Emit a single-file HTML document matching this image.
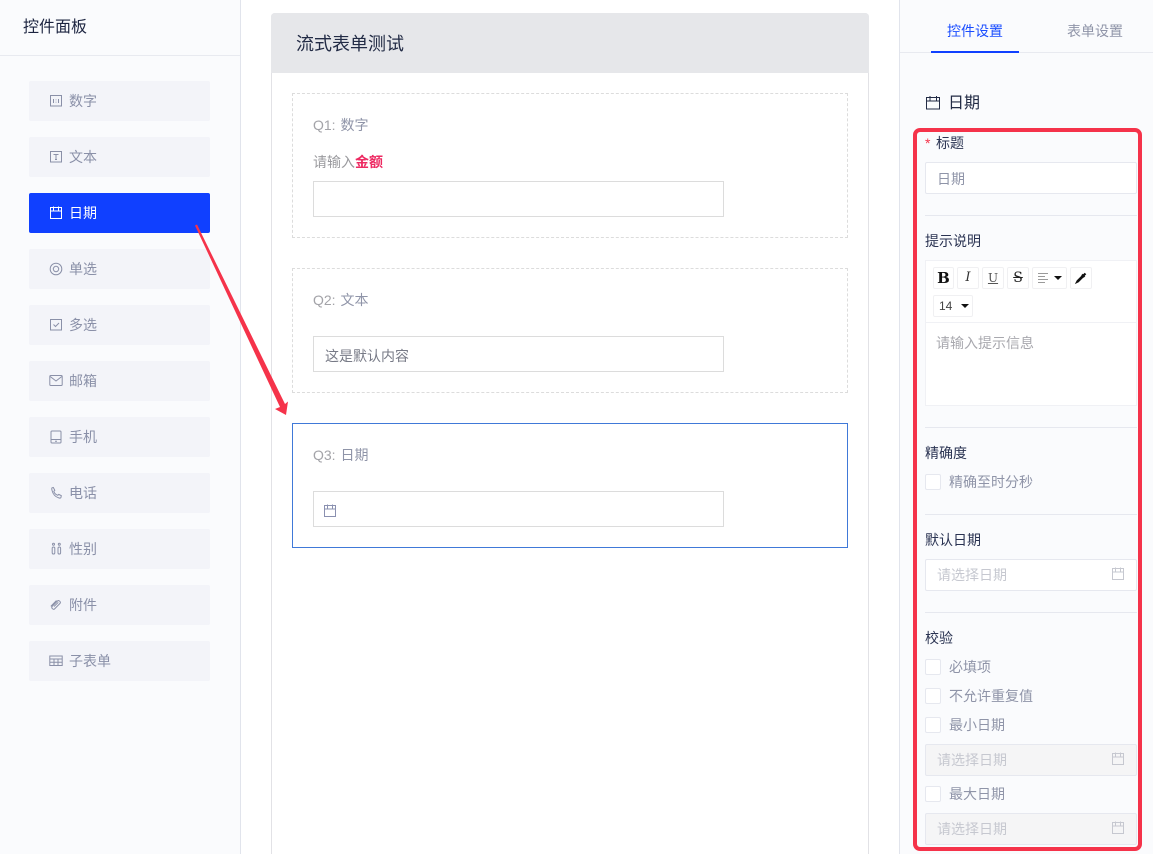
<!DOCTYPE html>
<html lang="zh">
<head>
<meta charset="utf-8">
<style>
html,body{margin:0;padding:0;width:1153px;height:854px;overflow:hidden;background:#fff}
body{position:relative;font-family:"Liberation Sans","Noto Sans CJK SC",sans-serif;font-size:14px;color:#8a8fa8}
.a{position:absolute;box-sizing:border-box}
.t{position:absolute;white-space:nowrap;line-height:20px}
.item{position:absolute;left:29px;width:181px;height:40px;box-sizing:border-box;background:#f3f4f9;border-radius:2px;color:#8a90a8;line-height:40px;padding-left:40px}
.item.on{background:#1040ff;color:#fff}
.item svg{position:absolute;left:20px;top:13px}
svg{display:block;fill:none;stroke:currentColor;stroke-width:1}
.lab{color:#2a3352}
.hr{position:absolute;left:925px;width:212px;height:1px;background:#e6e8ef}
.cb{position:absolute;left:925px;width:16px;height:16px;background:#fff;border:1px solid #e6e8ef;border-radius:2px;box-sizing:border-box}
.inp{position:absolute;left:925px;width:212px;height:32px;box-sizing:border-box;background:#fff;border:1px solid #e6e8ef;border-radius:2px;line-height:30px;padding-left:11px;color:#c6c8d0}
.inp.dis{background:#f5f5f6}
.inp svg{position:absolute;right:11px;top:7px;color:#c6c8d0}
.btn{position:absolute;height:22px;box-sizing:border-box;background:#fff;border:1px solid #f0f0f2;border-radius:2px;color:#222;text-align:center;line-height:20px;font-family:"DejaVu Serif",serif}
.car{position:absolute;width:0;height:0;border-left:4px solid transparent;border-right:4px solid transparent;border-top:4px solid #111}
.q{color:#8f94a8}
.q span{color:#a3a3a8;margin-right:1px}
</style>
</head>
<body>
<!-- left panel -->
<div class="a" style="left:0;top:0;width:241px;height:854px;background:#fafbfd;border-right:1px solid #e1e4ec"></div>
<div class="a" style="left:0;top:55px;width:240px;height:1px;background:#e8eaf0"></div>
<div class="t" style="left:23px;top:18px;font-size:16px;color:#1c2440">控件面板</div>

<div class="item" style="top:81px"><svg width="14" height="14" viewBox="0 0 14 14"><rect x="1.500" y="1.500" width="11" height="10.500"/><path d="M4.500 5v4M7 5.500v.7M7 7.800v.7M9.500 5v4"/></svg>数字</div>
<div class="item" style="top:137px"><svg width="14" height="14" viewBox="0 0 14 14"><rect x="1.500" y="1.500" width="11" height="10.500"/><path d="M4.500 4.500h5M7 4.500v5M6 9.500h2"/></svg>文本</div>
<div class="item on" style="top:193px"><svg width="14" height="14" viewBox="0 0 14 14"><rect x="1.500" y="1.500" width="11" height="11"/><path d="M1.500 5h11M4.500 .5V5M9.500 .5V5"/></svg>日期</div>
<div class="item" style="top:249px"><svg width="14" height="14" viewBox="0 0 14 14"><circle cx="7" cy="7" r="5.800"/><circle cx="7" cy="7" r="2.700"/></svg>单选</div>
<div class="item" style="top:305px"><svg width="14" height="14" viewBox="0 0 14 14"><rect x="1.500" y="1.500" width="11" height="10.500"/><path d="M4.500 6.500l2 2 3.500-3.500"/></svg>多选</div>
<div class="item" style="top:361px"><svg width="14" height="14" viewBox="0 0 14 14"><rect x=".8" y="1.500" width="12.400" height="10" rx="1"/><path d="M1.200 2.500L7 7l5.800-4.500"/></svg>邮箱</div>
<div class="item" style="top:417px"><svg width="14" height="14" viewBox="0 0 14 14"><rect x="2" y="1" width="10" height="12" rx="1"/><path d="M2 9.500h10M6 11.200h2"/></svg>手机</div>
<div class="item" style="top:473px"><svg width="14" height="14" viewBox="0 0 14 14"><path d="M3 1.800L4.300 1.500 5.800 4.300 4.800 5.300C5.300 7.300 6.800 8.600 8.700 9.300L9.800 8.400 12.300 9.700 12 11.300C11.700 12.200 10.800 12.300 9.800 11.900 6.200 10.800 3.800 7.800 3 4.300 2.700 3.200 2.600 2.300 3 1.800Z"/></svg>电话</div>
<div class="item" style="top:529px"><svg width="14" height="14" viewBox="0 0 14 14"><circle cx="4.500" cy="2.300" r="1"/><rect x="3.200" y="5" width="2.600" height="7" rx="1.300"/><circle cx="10.300" cy="2.300" r="1"/><rect x="9" y="5" width="2.600" height="7" rx="1.300"/></svg>性别</div>
<div class="item" style="top:585px"><svg width="14" height="14" viewBox="0 0 14 14"><path d="M3 8.500L8.500 3C9.800 1.800 12.300 3.900 11 5.400L5.500 11C4.500 12 2 10.300 3 8.500ZM5 8.500L9.300 4.300M1.800 8.300L7.500 2.500"/></svg>附件</div>
<div class="item" style="top:641px"><svg width="14" height="14" viewBox="0 0 14 14"><rect x=".8" y="2" width="12.400" height="9.500"/><path d="M.8 5h12.400M.8 8.200h12.400M5 5v6.500M9 5v6.500"/></svg>子表单</div>

<!-- centre -->
<div class="a" style="left:271px;top:13px;width:598px;height:841px;background:#fff;border:1px solid #e2e2e6;border-bottom:0;border-radius:4px 4px 0 0"></div>
<div class="a" style="left:271px;top:13px;width:598px;height:60px;background:#e6e7ea;border-radius:4px 4px 0 0"></div>
<div class="t" style="left:296px;top:33px;font-size:18px;line-height:22px;color:#222b45">流式表单测试</div>

<div class="a" style="left:292px;top:93px;width:556px;height:145px;border:1px dashed #dcdcdc"></div>
<div class="t q" style="left:313px;top:115px"><span>Q1:</span> 数字</div>
<div class="t" style="left:313px;top:152px;color:#9a9a9e">请输入<b style="color:#ed2a62;font-weight:700">金额</b></div>
<div class="a" style="left:313px;top:181px;width:411px;height:36px;background:#fff;border:1px solid #dcdcdc"></div>

<div class="a" style="left:292px;top:268px;width:556px;height:125px;border:1px dashed #dcdcdc"></div>
<div class="t q" style="left:313px;top:290px"><span>Q2:</span> 文本</div>
<div class="a" style="left:313px;top:336px;width:411px;height:36px;background:#fff;border:1px solid #dcdcdc;line-height:36px;padding-left:11px;color:#777a86"><span style="position:relative;top:1px">这是默认内容</span></div>

<div class="a" style="left:292px;top:423px;width:556px;height:125px;border:1px solid #4079d8"></div>
<div class="t q" style="left:313px;top:445px"><span>Q3:</span> 日期</div>
<div class="a" style="left:313px;top:491px;width:411px;height:36px;background:#fff;border:1px solid #dcdcdc"></div>
<svg class="a" style="left:323px;top:504px;color:#8a90b0" width="14" height="14" viewBox="0 0 14 14"><rect x="1.500" y="1.500" width="11" height="11"/><path d="M1.500 5h11M4.500 .5V5M9.500 .5V5"/></svg>

<!-- right panel -->
<div class="a" style="left:899px;top:0;width:254px;height:854px;background:#fafbfd;border-left:1px solid #e1e4ec"></div>
<div class="a" style="left:900px;top:52px;width:253px;height:1px;background:#e8eaf0"></div>
<div class="t" style="left:947px;top:21px;color:#1a4dff">控件设置</div>
<div class="a" style="left:931px;top:51px;width:88px;height:2px;background:#1040ff"></div>
<div class="t" style="left:1067px;top:21px;color:#8f94a8">表单设置</div>

<svg class="a" style="left:926px;top:96px;color:#222b45" width="14" height="14" viewBox="0 0 14 14"><rect x=".5" y="1.500" width="13" height="11.500"/><path d="M.5 5h13M4 0v5M10.500 0v5"/></svg>
<div class="t" style="left:948px;top:94px;font-size:16px;color:#222b45">日期</div>

<div class="t" style="left:925px;top:133px;color:#f5334a;font-size:14px">*</div>
<div class="t lab" style="left:936px;top:133px">标题</div>
<div class="inp" style="top:162px;color:#8f94a8;line-height:32px">日期</div>
<div class="hr" style="top:215px"></div>
<div class="t lab" style="left:925px;top:231px">提示说明</div>

<div class="a" style="left:925px;top:260px;width:212px;height:146px;background:#fff;border:1px solid #f0f1f5"></div>
<div class="a" style="left:926px;top:322px;width:210px;height:1px;background:#f0f1f5"></div>
<div class="btn" style="left:933px;top:267px;width:21px;font-weight:700;font-size:15px;color:#111">B</div>
<div class="btn" style="left:957px;top:267px;width:22px;font-style:italic;font-size:13px;color:#333">I</div>
<div class="btn" style="left:982px;top:267px;width:22px;text-decoration:underline;font-size:12px;color:#555">U</div>
<div class="btn" style="left:1007px;top:267px;width:22px;text-decoration:line-through;font-size:14px;color:#222">S</div>
<div class="btn" style="left:1032px;top:267px;width:35px"></div>
<svg class="a" style="left:1038px;top:273px;color:#9a9a9a" width="12" height="11" viewBox="0 0 12 11"><path d="M0 .5h10M0 3.500h7M0 6.500h10M0 9.500h7"/></svg>
<div class="car" style="left:1054px;top:276px"></div>
<div class="btn" style="left:1070px;top:267px;width:22px"></div>
<svg class="a" style="left:1074px;top:271px" width="14" height="14" viewBox="0 0 14 14"><path d="M1.500 12.500L3 9.500 8 4.500 9.500 6 4.500 11Z" fill="#111" stroke="#111" stroke-width=".6"/><path d="M8 3.500L10.500 6M9.500 4.500L11.500 2.500" stroke="#111" stroke-width="2.200"/></svg>
<div class="btn" style="left:933px;top:295px;width:40px;text-align:left;padding-left:5px;font-family:'Liberation Sans',sans-serif;font-size:12px;color:#444">14</div>
<div class="car" style="left:961px;top:304px"></div>
<div class="t" style="left:936px;top:333px;color:#a8a8ae">请输入提示信息</div>

<div class="hr" style="top:427px"></div>
<div class="t lab" style="left:925px;top:443px">精确度</div>
<div class="cb" style="top:474px"></div>
<div class="t q" style="left:949px;top:472px">精确至时分秒</div>
<div class="hr" style="top:514px"></div>
<div class="t lab" style="left:925px;top:530px">默认日期</div>
<div class="inp" style="top:559px">请选择日期<svg width="14" height="14" viewBox="0 0 14 14"><rect x="1.500" y="1.500" width="11" height="11"/><path d="M1.500 5h11M4.500 .5V5M9.500 .5V5"/></svg></div>
<div class="hr" style="top:612px"></div>
<div class="t lab" style="left:925px;top:628px">校验</div>
<div class="cb" style="top:659px"></div>
<div class="t q" style="left:949px;top:657px">必填项</div>
<div class="cb" style="top:688px"></div>
<div class="t q" style="left:949px;top:686px">不允许重复值</div>
<div class="cb" style="top:717px"></div>
<div class="t q" style="left:949px;top:715px">最小日期</div>
<div class="inp dis" style="top:744px">请选择日期<svg width="14" height="14" viewBox="0 0 14 14"><rect x="1.500" y="1.500" width="11" height="11"/><path d="M1.500 5h11M4.500 .5V5M9.500 .5V5"/></svg></div>
<div class="cb" style="top:786px"></div>
<div class="t q" style="left:949px;top:784px">最大日期</div>
<div class="inp dis" style="top:813px">请选择日期<svg width="14" height="14" viewBox="0 0 14 14"><rect x="1.500" y="1.500" width="11" height="11"/><path d="M1.500 5h11M4.500 .5V5M9.500 .5V5"/></svg></div>

<!-- annotations -->
<div class="a" style="left:913px;top:128px;width:229px;height:723px;border:4px solid #f5334a;border-radius:7px"></div>
<svg class="a" style="left:190px;top:220px;pointer-events:none" width="105" height="200" viewBox="0 0 105 200"><path d="M5 5.500L7 4.500 95 184 98 181.500 96 195 85 189 90 187Z" fill="#f5334a" stroke="none"/></svg>
</body>
</html>
